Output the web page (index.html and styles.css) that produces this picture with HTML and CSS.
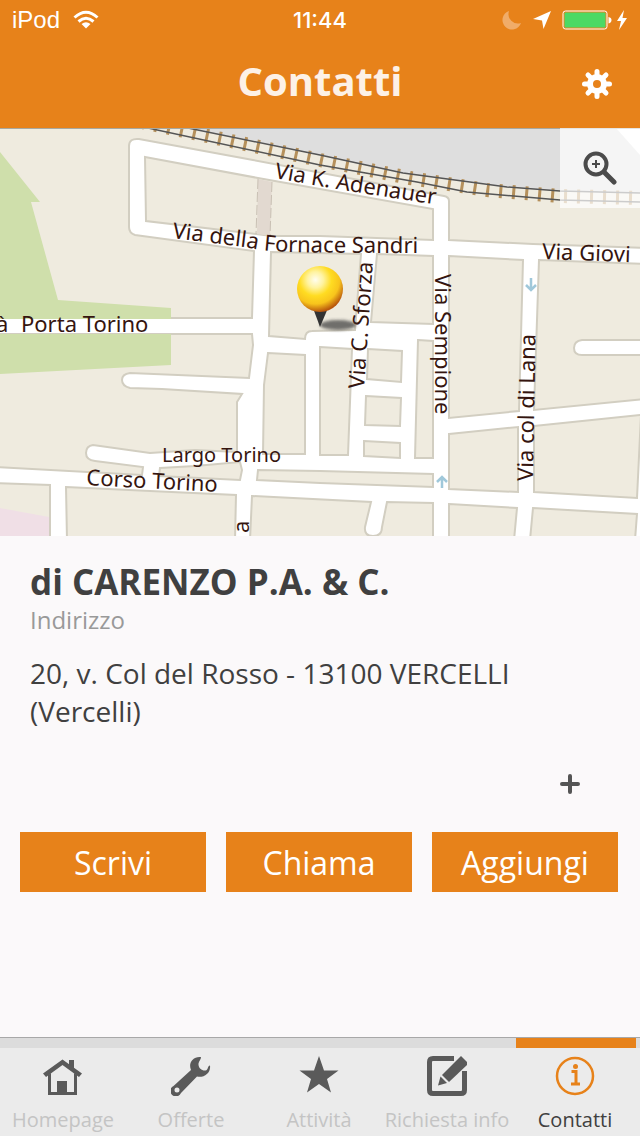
FILE: index.html
```html
<!DOCTYPE html>
<html lang="it">
<head>
    <meta charset="UTF-8">
    <meta name="viewport" content="width=device-width, initial-scale=1.0">
    <title>Contatti</title>
    <link rel="stylesheet" href="styles.css">
</head>
<body>
    <header class="header">
        <div class="status-bar">
            <div class="status-left">
                <span>iPod</span>
                <svg width="26" height="20" viewBox="0 0 26 20" fill="none" stroke="#fff" stroke-width="3">
                    <path d="M1.500 7.500Q13 -3 24.500 7.500"/>
                    <path d="M5.500 11.500Q13 5 20.500 11.500"/>
                    <path d="M8.500 14Q13 10.500 17.500 14L13 18.500Z" fill="#fff" stroke="none"/>
                </svg>
            </div>
            <time class="clock">11:44</time>
            <div class="status-right">
                <svg width="20" height="20" viewBox="0 0 20 20"><path d="M7 1A9.500 9.500 0 1 0 19 13A9.500 9.500 0 0 1 7 1Z" fill="#f0ac69"/></svg>
                <svg width="20" height="20" viewBox="0 0 20 20"><path d="M19 1L11.500 19L10 10.500L1 9Z" fill="#fff"/></svg>
                <svg width="50" height="20" viewBox="0 0 50 20">
                    <rect x="1" y="1" width="44" height="18" rx="2.500" fill="none" stroke="#fff"/>
                    <rect x="2.500" y="2.500" width="41" height="15" rx="1" fill="#4cd964"/>
                    <path d="M46.500 7Q49.500 7.500 49.500 10T46.500 13.500Z" fill="#fff"/>
                </svg>
                <svg class="bolt" width="12" height="20" viewBox="0 0 12 20"><path d="M8 0L1 11H5L3 20L11 8H6.500Z" fill="#fff"/></svg>
            </div>
        </div>
        <div class="title-bar">
            <h1>Contatti</h1>
            <button class="settings" aria-label="Impostazioni">
                <svg width="30" height="30" viewBox="-15 -15 30 30" fill="none" stroke="#fff">
                    <circle r="7" stroke-width="6"/>
                    <path stroke-width="5" stroke-linecap="round" d="M0 -9V-12.500M0 9V12.500M-9 0H-12.500M9 0H12.500M-6.500 -6.500L-9 -9M6.500 -6.500L9 -9M-6.500 6.500L-9 9M6.500 6.500L9 9"/>
                </svg>
            </button>
        </div>
    </header>

    <section class="map">
        <svg class="map-canvas" viewBox="0 128 640 408">
            <defs>
                <radialGradient id="ball" cx="0.4" cy="0.3" r="0.7">
                    <stop offset="0" stop-color="#fffdf0"/>
                    <stop offset="0.25" stop-color="#fff3a0"/>
                    <stop offset="0.5" stop-color="#ffdc22"/>
                    <stop offset="0.75" stop-color="#f8c41c"/>
                    <stop offset="1" stop-color="#b8560c"/>
                </radialGradient>
                <filter id="soft" x="-20%" y="-60%" width="140%" height="220%"><feGaussianBlur stdDeviation="1.5"/></filter>
                <path id="adenauer" d="M274 178Q350 192 460 208"/>
                <path id="fornace" d="M172 238L245 247Q262 251 290 252T440 253"/>
            </defs>
            <rect y="128" width="640" height="408" fill="#fff"/>
            <!-- blocks between the streets -->
            <g class="block">
                <path d="M-5 120H645V248L533 244L449 240V201Q449 197 444 196L253 160L139 139Q129 138 129 146V227Q129 233 135 235L254 251L252 318H-5Z"/>
                <path d="M145 157L258 178L433 209V240L320 236H272L146 221Z"/>
                <path d="M271 252L361 254L355 330L312 331Q305 331 305 339L269 336Z"/>
                <path d="M377 254L433 256V324L371 322Z"/>
                <path d="M449 256L523 260L519 411L449 418Z"/>
                <path d="M539 260L645 264V399L534 410Z"/>
                <path d="M449 434L518 427V492L449 489Z"/>
                <path d="M534 426L641 415L637 498L534 492Z"/>
                <path d="M449 504L517 508L514 540H449Z"/>
                <path d="M533 508L637 514L635 540H530Z"/>
                <path d="M418 340L433 341V458H415Z"/>
                <path d="M368 349L402 351L401 382L367 379Z"/>
                <path d="M366 396L401 398L400 426L365 425Z"/>
                <path d="M364 441L400 443V458L364 456Z"/>
                <path d="M320 347L352 349L348 455H320Z"/>
                <path d="M268 353L305 355V454H263L264 385Z"/>
                <path d="M258 470L320 471L433 474V487L320 483L257 480Z"/>
                <path d="M252 496L371 502L365 527Q364 536 373 536T382 527L387 502L433 503V540H250Z"/>
                <path d="M-5 334H252L253 345L249 378L130 373Q122 374 122 380T130 388L162 389L242 394L237 402V452L195 450L150 453L93 445Q86 446 86 453T95 461L143 467L142 475L-5 467Z"/>
                <path d="M160 468L195 466L240 462L242 470L240 480L159 476Z"/>
                <path d="M-5 483L50 485V540H-5Z"/>
                <path d="M66 487L150 491L236 495L235 540H67Z"/>
                <path d="M645 340H582Q574 341 574 348T582 355H645Z" class="street"/>
            </g>
            <path d="M0 152L40 202H31L58 300L171 308V319H0ZM0 334H171V365L0 374Z" fill="#cfdfab"/>
            <path d="M0 508L49 517V536H0Z" fill="#f0dfe6"/>
            <path d="M258 179L272 182L270 236L257 234Z" fill="#e2d9d0"/>
            <path d="M258 179L256 234M272 182L270 236" stroke="#c9c0b4" stroke-dasharray="10 3" fill="none"/>

            <!-- railway -->
            <path d="M188 128L320 155L403 173L507 187L560 191L640 193V128Z" fill="#dedede"/>
            <path d="M616 128H640V155Z" fill="#fff"/>
            <path d="M142 122L320 160L410 178L487 190L560 196L640 198" stroke="#b5905b" stroke-width="14" stroke-dasharray="3 10" fill="none"/>
            <path d="M188 128L320 155L403 173L507 187L560 191L640 193M148 128L320 165L417 182L467 192L560 200L640 202" stroke="#555" stroke-width="1.500" fill="none"/>

            <path d="M531 278V290M526 285L531 290L536 285M442 488V477M437 482L442 477L447 482" stroke="#a0c8da" stroke-width="2.500" fill="none"/>
            <path d="M0 128.500H640" stroke="#a8a8a0"/>

            <g class="street-name">
                <text><textPath href="#adenauer">Via K. Adenauer</textPath></text>
                <text><textPath href="#fornace">Via della Fornace Sandri</textPath></text>
                <text transform="translate(542 259) rotate(2)">Via Giovi</text>
                <text x="-4" y="332">à</text>
                <text x="21" y="332">Porta Torino</text>
                <text x="162" y="462" class="square-name">Largo Torino</text>
                <text transform="translate(86 485) rotate(3)">Corso Torino</text>
                <text transform="translate(364 389) rotate(-86)">Via C. Sforza</text>
                <text transform="translate(435 274) rotate(90)">Via Sempione</text>
                <text transform="translate(533 481) rotate(-89)">Via col di Lana</text>
                <text transform="translate(249 533) rotate(-90)">a</text>
            </g>

            <!-- pin -->
            <ellipse cx="338" cy="325" rx="18" ry="5" fill="#444" fill-opacity="0.75" filter="url(#soft)"/>
            <path d="M313 308H328L320 327Z" fill="#333"/>
            <circle cx="320" cy="289" r="23" fill="url(#ball)"/>
        </svg>
        <button class="zoom" aria-label="Ingrandisci la mappa">
            <svg width="34" height="34" viewBox="0 0 34 34" fill="none" stroke="#4b4b4b">
                <circle cx="13" cy="13" r="10.500" stroke-width="4"/>
                <path d="M21 21L31 31" stroke-width="5" stroke-linecap="round"/>
                <path d="M9 13H17M13 9V17" stroke-width="2"/>
            </svg>
        </button>
    </section>

    <main class="details">
        <h2>di CARENZO P.A. &amp; C.</h2>
        <p class="label">Indirizzo</p>
        <p class="address">20, v. Col del Rosso - 13100 VERCELLI (Vercelli)</p>
        <button class="more" aria-label="Mostra altro">
            <svg width="20" height="20" viewBox="0 0 20 20"><path d="M2 10H18M10 2V18" stroke="#555" stroke-width="4" stroke-linecap="round"/></svg>
        </button>
        <div class="actions">
            <button class="action">Scrivi</button>
            <button class="action">Chiama</button>
            <button class="action">Aggiungi</button>
        </div>
    </main>

    <nav class="tabs">
        <a class="tab" href="#home">
            <svg width="40" height="40" viewBox="0 0 40 40" fill="#5a5a5a">
                <path d="M26 4H31V14L26 10Z"/>
                <path d="M19.500 3.500L39 17.500L36 21L19.500 9L3 21L0 17.500Z"/>
                <path d="M5 19L8 17V36H14V25H24V36H31V17L34 19V39H5Z"/>
            </svg>
            <span>Homepage</span>
        </a>
        <a class="tab" href="#offerte">
            <svg width="40" height="40" viewBox="0 0 40 40" fill="#5a5a5a">
                <path fill-rule="evenodd" d="M30 1C22 0 17 7 20 14L2.500 30A5.500 5.500 0 1 0 10 37L26 20.500C33 22 40 17 39 9.500C36.500 9.500 37.500 14 34.500 14.500C31 15 27 12 27.500 7.500C28 4.500 30 4 30 1ZM6 31.500A2.500 2.500 0 1 1 6 36.500A2.500 2.500 0 1 1 6 31.500Z"/>
            </svg>
            <span>Offerte</span>
        </a>
        <a class="tab" href="#attivita">
            <svg width="40" height="40" viewBox="0 0 40 40" fill="#5a5a5a">
                <path d="M20 0L25 14.500L39.500 14.500L28 23L32 36.500L20 28L8 36.500L12 23L0.500 14.500L15 14.500Z"/>
            </svg>
            <span>Attività</span>
        </a>
        <a class="tab" href="#richiesta">
            <svg width="40" height="40" viewBox="0 0 40 40">
                <path d="M27 2.500H6Q2.500 2.500 2.500 6V34Q2.500 37.500 6 37.500H34Q37.500 37.500 37.500 34V15" fill="none" stroke="#5a5a5a" stroke-width="5"/>
                <path d="M34 0L40 6V9L22 26L15 19L31 3Z" fill="#5a5a5a"/>
                <path d="M13.500 20.500L20 27L11 29.500Z" fill="#5a5a5a"/>
            </svg>
            <span>Richiesta info</span>
        </a>
        <a class="tab active" href="#contatti" aria-current="page">
            <svg width="40" height="40" viewBox="0 0 40 40" fill="none" stroke="#e7821a">
                <circle cx="20" cy="20" r="18" stroke-width="2.500"/>
                <circle cx="20.500" cy="10.500" r="2.500" fill="#e7821a" stroke="none"/>
                <path d="M16.500 15.500H21V28M16 28H25" stroke-width="3"/>
            </svg>
            <span>Contatti</span>
        </a>
    </nav>
</body>
</html>
```
FILE: styles.css
```css
* {
    box-sizing: border-box;
    margin: 0;
    padding: 0;
}
body {
    font-family: 'Open Sans', 'Noto Sans', sans-serif;
    display: flex;
    flex-direction: column;
    min-height: 100vh;
    background-color: #fbf9fa;
    color: #404040;
}
button {
    background: none;
    border: none;
    font-family: inherit;
    cursor: pointer;
}
svg {
    display: block;
}
.header {
    background-color: #e7821a;
    color: #fff;
}
.status-bar {
    display: grid;
    grid-template-columns: 1fr auto 1fr;
    align-items: center;
    height: 40px;
    padding: 0 12px;
    font-family: 'Liberation Sans', Arial, sans-serif;
    font-size: 24px;
}
.status-left {
    display: flex;
    align-items: center;
    gap: 13px;
}
.clock {
    font-family: Inter, sans-serif;
    font-size: 22px;
    font-weight: 500;
}
.status-right {
    display: flex;
    justify-content: flex-end;
    align-items: center;
    gap: 10px;
}
.bolt {
    margin-left: -6px;
}
.title-bar {
    display: grid;
    grid-template-columns: 1fr auto 1fr;
    align-items: center;
    height: 88px;
    padding: 0 28px;
}
h1 {
    grid-column: 2;
    padding-bottom: 6px;
    font-size: 40px;
    line-height: 60px;
    color: #fdf1e6;
}
.settings {
    justify-self: end;
}
.map {
    position: relative;
}
.map-canvas {
    width: 100%;
    height: auto;
}
.block {
    fill: #efebdf;
    stroke: #d2cec1;
    stroke-width: 2px;
}
.street {
    fill: #fff;
}
.street-name {
    font-family: 'Noto Sans', sans-serif;
    font-size: 22px;
    fill: #35150f;
}
.square-name {
    font-size: 20px;
}
.zoom {
    position: absolute;
    top: 0;
    right: 0;
    width: 80px;
    height: 80px;
    display: flex;
    justify-content: center;
    align-items: center;
    background-color: rgba(255, 255, 255, 0.7);
}
.details {
    flex: 1;
    padding: 22px 22px 20px 20px;
}
h2 {
    padding: 0 10px;
    font-size: 35px;
    line-height: 48px;
}
.label {
    padding: 0 10px;
    font-size: 24px;
    line-height: 28px;
    color: #999;
}
.address {
    max-width: 540px;
    margin-top: 20px;
    padding: 0 10px;
    font-size: 28px;
    line-height: 38px;
}
.more {
    display: block;
    margin: 34px 28px 28px auto;
    padding: 10px;
}
.actions {
    display: flex;
    gap: 20px;
}
.action {
    flex: 1;
    height: 60px;
    background-color: #e7821a;
    color: #fff;
    font-size: 32px;
}
.tabs {
    display: flex;
    background-color: #ebebeb;
    border-top: 1px solid #a8a8a8;
}
.tab {
    flex: 1;
    display: flex;
    flex-direction: column;
    align-items: center;
    padding: 0 2px 2px 0;
    font-size: 20px;
    line-height: 28px;
    color: #c4c4c4;
    text-decoration: none;
    white-space: nowrap;
    background: linear-gradient(#dcdcdc, #dcdcdc) top / 100% 10px no-repeat;
}
.tab svg {
    margin: 18px 0 10px;
}
.tab.active {
    color: #404040;
    background: linear-gradient(#e7821a, #e7821a) top / 120px 10px no-repeat, linear-gradient(#dcdcdc, #dcdcdc) top / 100% 10px no-repeat;
}
```
